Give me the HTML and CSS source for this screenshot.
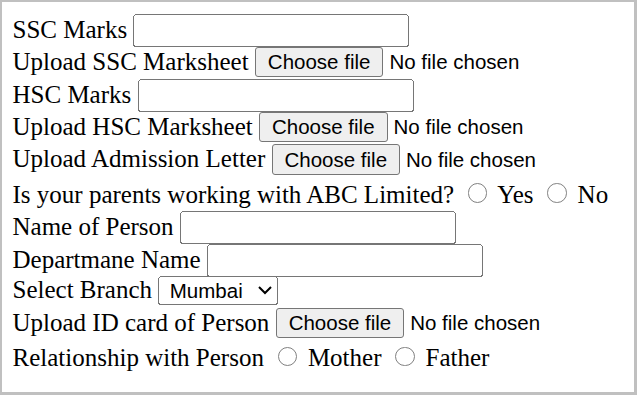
FILE: index.html
```html
<!DOCTYPE html>
<html lang="en">
<head>
    <meta charset="utf-8">
    <title>Admission Details</title>
    <link rel="stylesheet" href="styles.css">
</head>
<body>
    <div class="frame">
        <form class="form-all">
            <div class="row"><label for="ssc_marks">SSC Marks</label> <input type="text" id="ssc_marks" class="field"></div>
            <div class="row"><label for="ssc_sheet">Upload SSC Marksheet</label> <span class="file"><input type="file" id="ssc_sheet" class="file-input"><label for="ssc_sheet" class="file-btn">Choose file</label><span class="file-name">No file chosen</span></span></div>
            <div class="row"><label for="hsc_marks">HSC Marks</label> <input type="text" id="hsc_marks" class="field"></div>
            <div class="row"><label for="hsc_sheet">Upload HSC Marksheet</label> <span class="file"><input type="file" id="hsc_sheet" class="file-input"><label for="hsc_sheet" class="file-btn">Choose file</label><span class="file-name">No file chosen</span></span></div>
            <div class="row"><label for="admission_letter">Upload Admission Letter</label> <span class="file"><input type="file" id="admission_letter" class="file-input"><label for="admission_letter" class="file-btn">Choose file</label><span class="file-name">No file chosen</span></span></div>
            <div class="row row-radio">Is your parents working with ABC Limited? <input type="radio" name="parent_abc" id="parent_yes" class="radio"> <label for="parent_yes">Yes</label> <input type="radio" name="parent_abc" id="parent_no" class="radio"> <label for="parent_no">No</label></div>
            <div class="row"><label for="person_name">Name of Person</label> <input type="text" id="person_name" class="field"></div>
            <div class="row"><label for="department">Departmane Name</label> <input type="text" id="department" class="field"></div>
            <div class="row row-select"><label for="branch">Select Branch</label> <select id="branch" class="branch">
                <option>Mumbai</option>
                <option>Pune</option>
                <option>Delhi</option>
            </select></div>
            <div class="row"><label for="id_card">Upload ID card of Person</label> <span class="file"><input type="file" id="id_card" class="file-input"><label for="id_card" class="file-btn">Choose file</label><span class="file-name">No file chosen</span></span></div>
            <div class="row row-radio">Relationship with Person <input type="radio" name="relation" id="rel_mother" class="radio"> <label for="rel_mother">Mother</label> <input type="radio" name="relation" id="rel_father" class="radio"> <label for="rel_father">Father</label></div>
        </form>
    </div>
</body>
</html>
```

FILE: styles.css
```css
html, body {
    margin: 0;
    padding: 0;
}
body {
    background: white;
    color: black;
}
.frame {
    box-sizing: border-box;
    width: 637px;
    height: 395px;
    border: 2px solid #c0c0c0;
    border-right-width: 3px;
    border-bottom-width: 3px;
    background: white;
    overflow: hidden;
}
.form-all {
    zoom: 1.5;
    padding: 8px 7px;
    font-family: "Liberation Serif", "Times New Roman", serif;
    font-size: 16.667px;
}
.row {
    box-sizing: border-box;
    height: 21.667px;
    white-space: nowrap;
}
.row-radio {
    height: 23px;
    padding-top: 1.5px;
}
.row-select {
    height: 21px;
}
input, select, .file {
    font-family: "Liberation Sans", Arial, sans-serif;
    font-size: 13.667px;
}
.field {
    box-sizing: border-box;
    width: 184px;
}
.radio {
    appearance: none;
    box-sizing: border-box;
    display: inline-block;
    width: 13px;
    height: 13px;
    margin: 3px 3px 0 5px;
    border: 1px solid #808080;
    border-radius: 50%;
    background: white;
}
.radio:checked {
    border-color: #0075ff;
    background: #0075ff;
    box-shadow: inset 0 0 0 2px white;
}
.file-input {
    display: none;
}
.file-btn {
    display: inline-block;
    line-height: 17px;
    padding: 1px 8px;
    margin-right: 4px;
    background: #efefef;
    color: black;
    border: 1px solid #767676;
    border-radius: 2px;
    cursor: default;
}
.file-btn:hover {
    background: #e5e5e5;
}
.branch {
    box-sizing: border-box;
    width: 80px;
    height: 19.5px;
    padding-left: 3px;
}
```
